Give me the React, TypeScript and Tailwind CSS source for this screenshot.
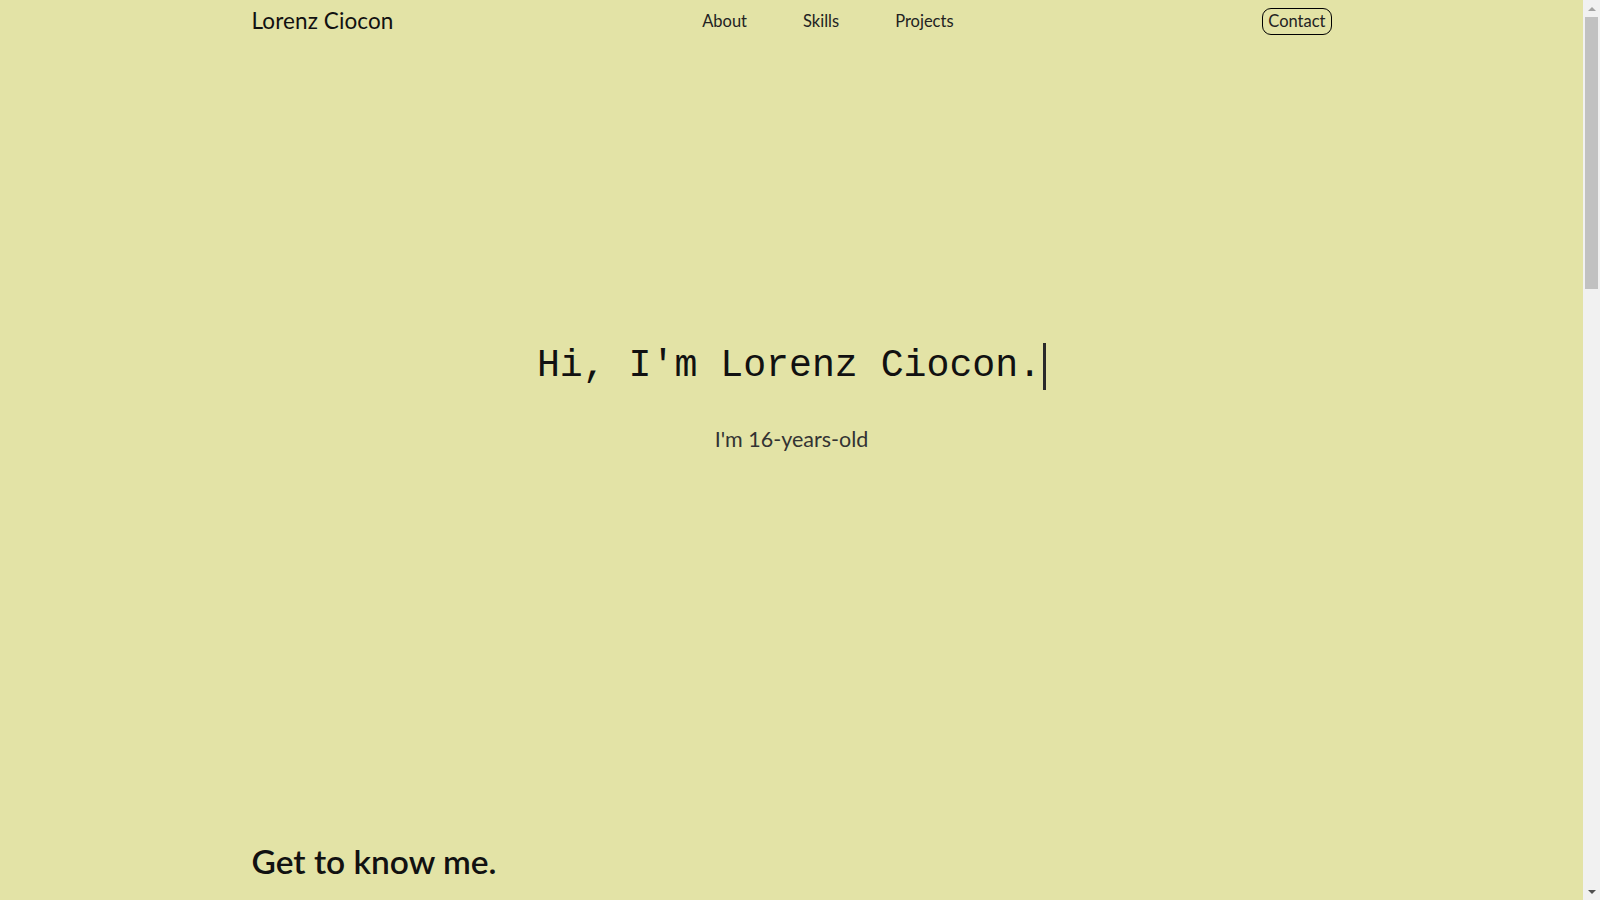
import { useEffect, useState } from "react";

const sans = "font-['Lato','Open_Sans',sans-serif]";

const Nav = () => (
    <nav className="mx-auto flex h-[42px] w-full max-w-[1080px] items-center justify-between">
        <a className={`${sans} text-[22.5px] tracking-[0.1px] text-[#111]`}>Lorenz Ciocon</a>
        <div className={`${sans} flex gap-14 text-[16.5px] text-[#222]`}>
            <a>About</a>
            <a>Skills</a>
            <a>Projects</a>
        </div>
        <button
            className={`${sans} h-[27px] rounded-[9px] border-[1.5px] border-black px-[5px] text-[16.5px] leading-none text-[#222]`}
        >
            Contact
        </button>
    </nav>
);

// window scrollbar as it shows in the screenshot
const Scrollbar = () => (
    <div className="fixed top-0 right-0 flex h-screen w-[17px] flex-col items-center bg-[#f1f1f1]">
        <div className="flex h-[17px] w-full items-center justify-center">
            <div className="h-0 w-0 border-x-[4px] border-b-[4px] border-x-transparent border-b-[#a3a3a3]" />
        </div>
        <div className="h-[272px] w-[13px] bg-[#c1c1c1]" />
        <div className="flex-1" />
        <div className="flex h-[17px] w-full items-center justify-center">
            <div className="h-0 w-0 border-x-[4px] border-t-[4px] border-x-transparent border-t-[#505050]" />
        </div>
    </div>
);

const App = () => {
    // caret after the typed headline
    const [caret, setCaret] = useState(true);

    useEffect(() => {
        const id = setInterval(() => setCaret(true), 700);
        return () => clearInterval(id);
    }, []);

    return (
        <div className="min-h-[2700px] w-full bg-[#e3e3a6]">
            <div className="w-[calc(100%-17px)]">
                <Nav />

                {/* Hero */}
                <section className="flex h-[714px] flex-col items-center justify-center">
                    <h1 className="flex items-center font-['Liberation_Mono','DejaVu_Sans_Mono',monospace] text-[38.2px] leading-none text-[#111]">
                        <span>Hi, I'm Lorenz Ciocon.</span>
                        <span className={`ml-[2px] h-[47px] w-[3px] bg-[#2a2a2a] ${caret ? "opacity-100" : "opacity-0"}`} />
                    </h1>
                    <p className={`${sans} mt-[33px] text-[21.5px] text-[#333]`}>I'm 16-years-old</p>
                </section>

                {/* About */}
                <section className="mx-auto w-full max-w-[1080px] pt-[80px]">
                    <h2 className={`${sans} text-[33.5px] font-semibold text-[#111]`}>Get to know me.</h2>
                </section>
            </div>
            <Scrollbar />
        </div>
    );
};

export default App;
